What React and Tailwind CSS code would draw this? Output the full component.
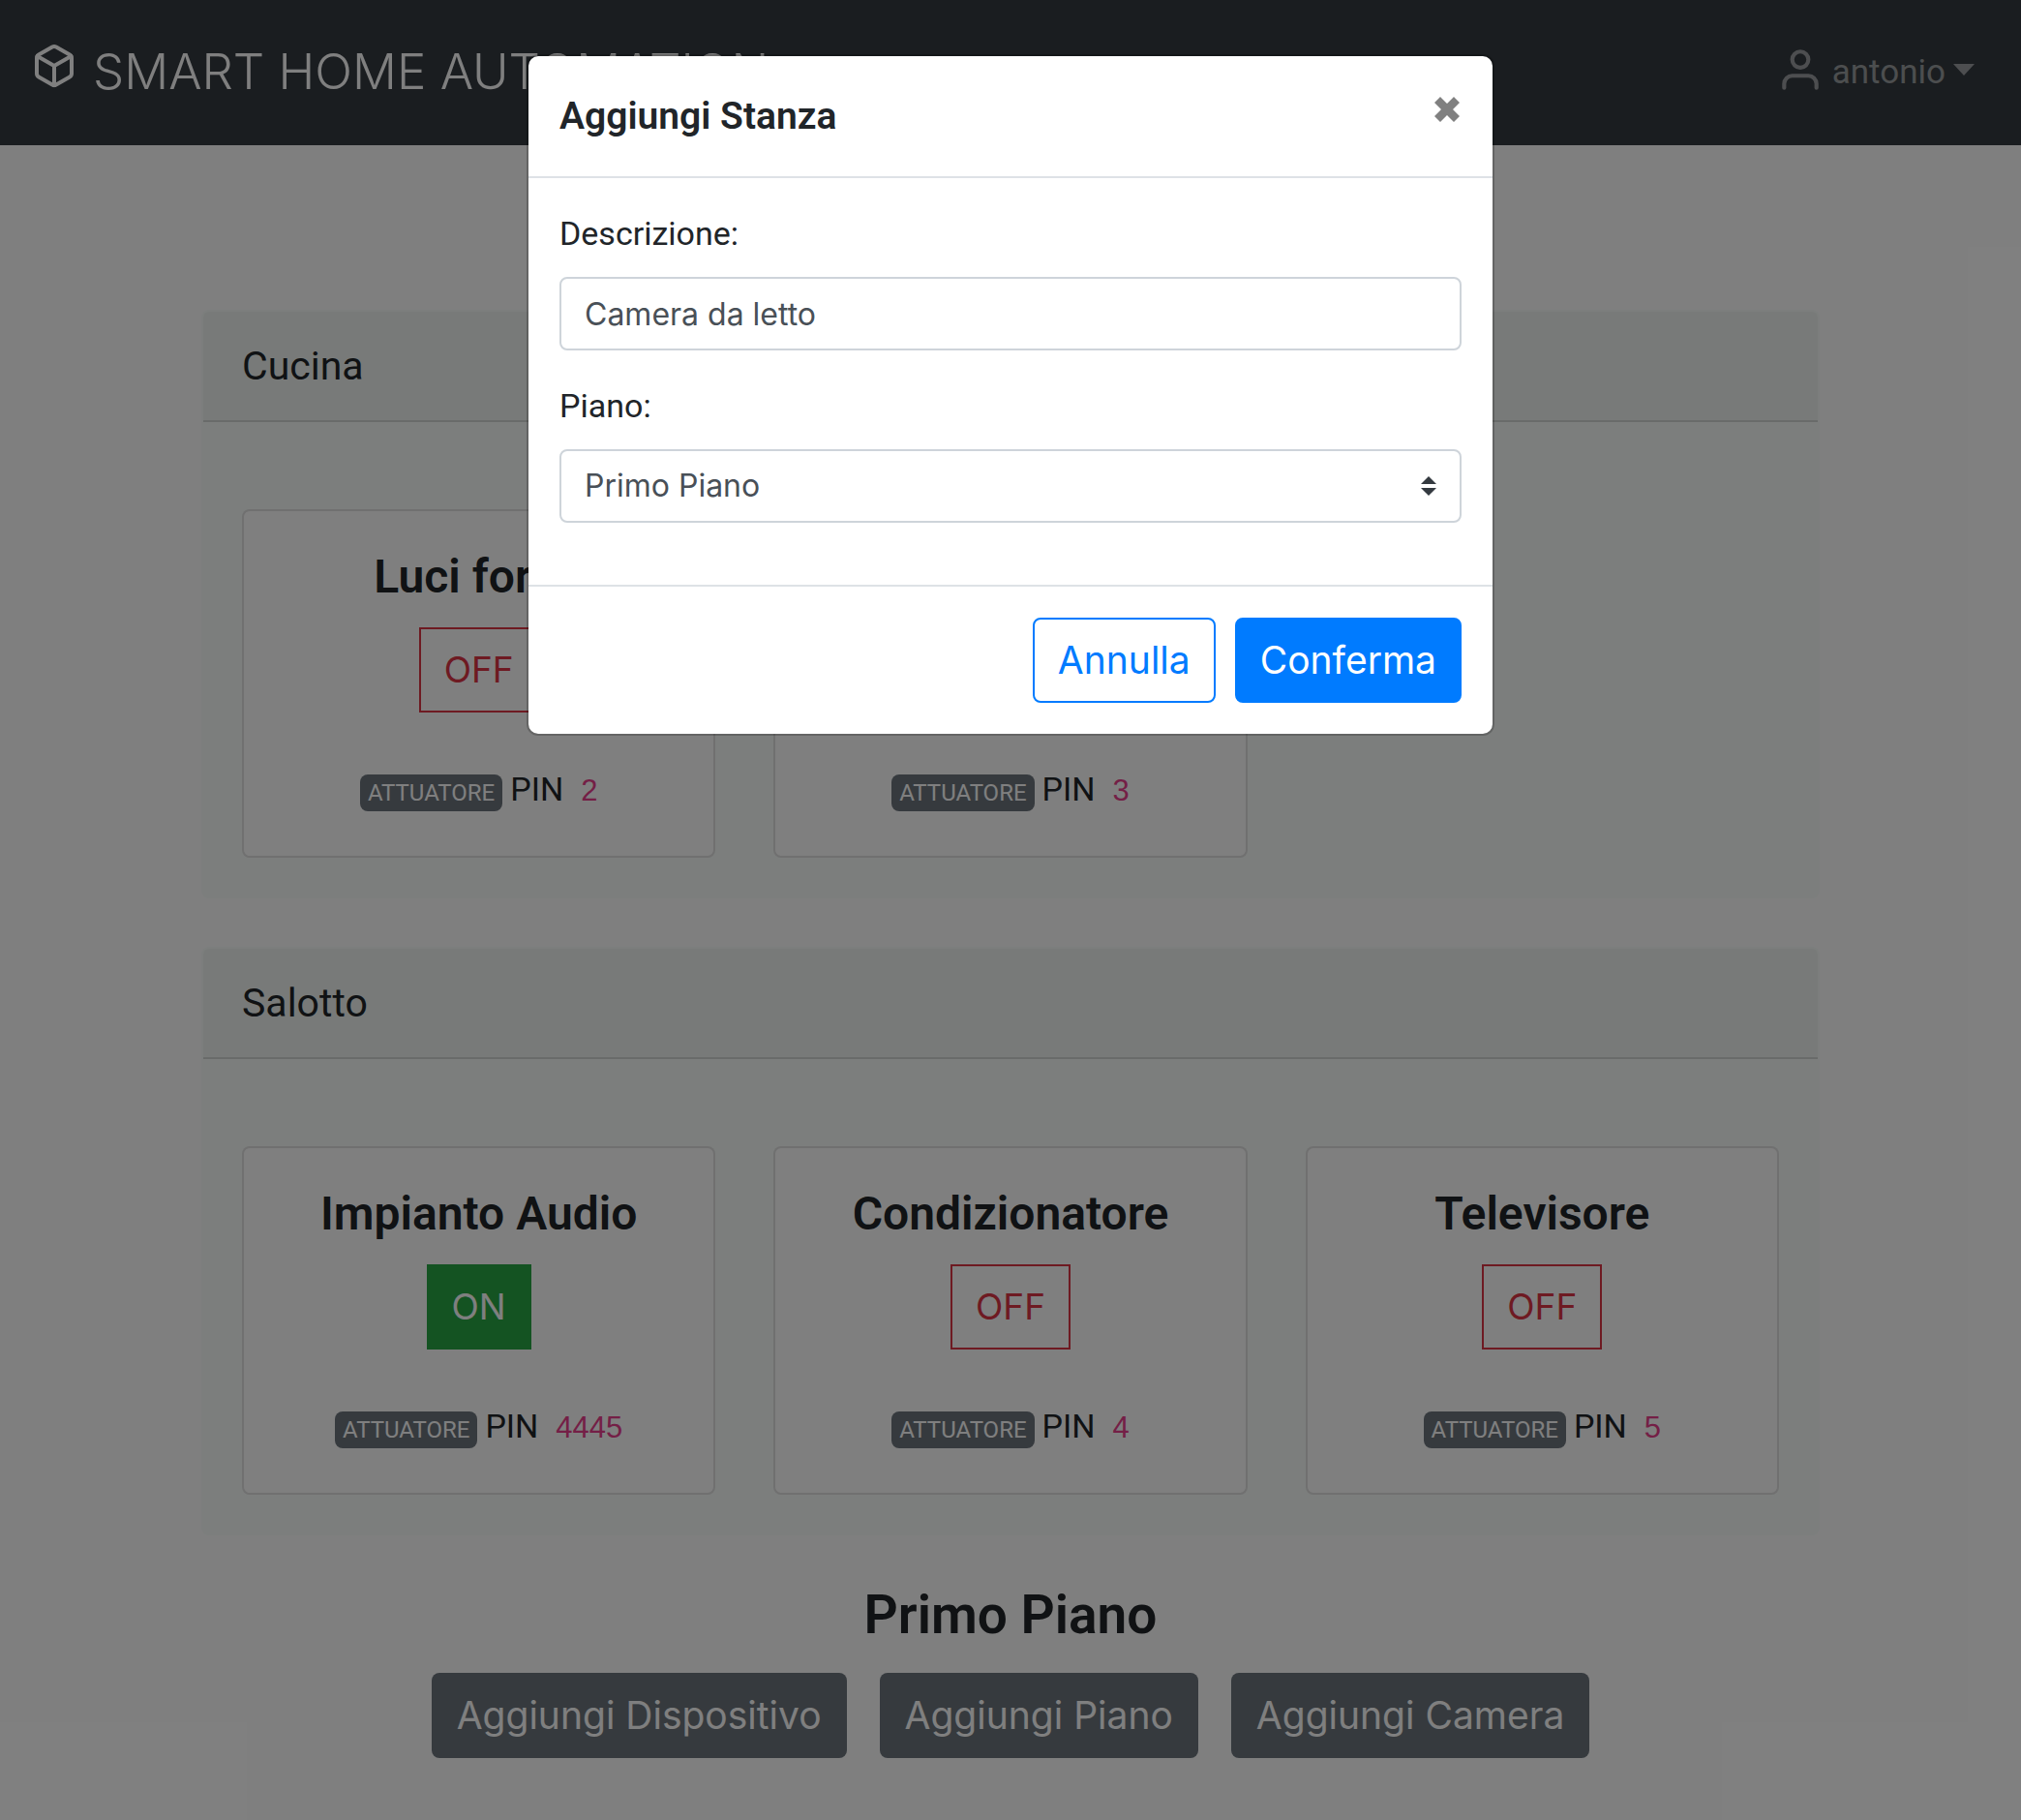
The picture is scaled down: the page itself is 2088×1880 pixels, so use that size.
const rooms = [
  {
    name: "Cucina",
    devices: [
      { name: "Luci forno", on: false, pin: "2" },
      { name: "Luci tavolo", on: false, pin: "3" },
    ],
  },
  {
    name: "Salotto",
    devices: [
      { name: "Impianto Audio", on: true, pin: "4445" },
      { name: "Condizionatore", on: false, pin: "4" },
      { name: "Televisore", on: false, pin: "5" },
    ],
  },
];

function Navbar() {
  return (
    <header className="flex h-[150px] items-start justify-between bg-[#343a40] px-8 pt-11">
      <a href="#" className="flex gap-4 text-white">
        <svg viewBox="0 0 24 24" className="size-12" fill="none" stroke="currentColor" strokeWidth="2" strokeLinecap="round" strokeLinejoin="round" aria-hidden="true">
          <path d="M21 16V8a2 2 0 0 0-1-1.73l-7-4a2 2 0 0 0-2 0l-7 4A2 2 0 0 0 3 8v8a2 2 0 0 0 1 1.73l7 4a2 2 0 0 0 2 0l7-4A2 2 0 0 0 21 16z" />
          <path d="M3.27 6.96 12 12.01l8.73-5.05M12 22.08V12" />
        </svg>
        <span className="pt-1 font-['Inter'] text-[51px] leading-[52px] font-light">SMART HOME AUTOMATION</span>
      </a>
      <button type="button" className="flex items-center gap-2 pr-4 text-white/50">
        <svg viewBox="0 0 24 24" className="size-[50px]" fill="none" stroke="currentColor" strokeWidth="2" strokeLinecap="round" strokeLinejoin="round" aria-hidden="true">
          <path d="M20 21v-2a4 4 0 0 0-4-4H8a4 4 0 0 0-4 4v2" />
          <circle cx="12" cy="7" r="4" />
        </svg>
        <span className="pt-1.5 text-[35px] leading-[50px]">antonio</span>
        <svg viewBox="0 0 22 12" className="h-3 w-[22px]" fill="currentColor" aria-hidden="true">
          <path d="M0 0h22L11 12z" />
        </svg>
      </button>
    </header>
  );
}

function Device({ device }) {
  return (
    <article className="flex flex-col items-center rounded-lg border-2 border-black/12 bg-white pt-10 pb-10">
      <h3 className="text-5xl leading-[56px] font-semibold">{device.name}</h3>
      {device.on ? (
        <button type="button" className="mt-6 h-[88px] border-2 border-[#28a745] bg-[#28a745] px-6 font-['Inter'] text-[37px] text-white">ON</button>
      ) : (
        <button type="button" className="mt-6 h-[88px] border-2 border-[#dc3545] px-6 font-['Inter'] text-[37px] text-[#dc3545]">OFF</button>
      )}
      <p className="mt-[52px] flex h-14 items-baseline gap-2 text-[34px] leading-[54px]">
        <span className="rounded-lg bg-[#6c757d] px-2 text-2xl leading-[38px] text-white">ATTUATORE</span>
        <span>PIN</span>
        <code className="pl-2.5 font-['Liberation_Sans'] text-[31px] text-[#e83e8c]">{device.pin}</code>
      </p>
    </article>
  );
}

function Room({ room }) {
  return (
    <section className="overflow-hidden rounded-lg border-2 border-transparent bg-[#f8fdfa] text-[#212529]">
      <h2 className="border-b-2 border-black/12 bg-black/3 px-10 py-7 text-[41px] leading-[56px]">{room.name}</h2>
      <div className="grid grid-cols-3 gap-[60px] px-10 pt-[90px] pb-10">
        {room.devices.map((d) => (
          <Device key={d.pin} device={d} />
        ))}
      </div>
    </section>
  );
}

function FloorActions() {
  return (
    <section className="flex flex-col items-center pt-[50px]">
      <h2 className="text-[55px] leading-[64px] font-semibold">Primo Piano</h2>
      <div className="mt-7 flex gap-[34px]">
        {["Aggiungi Dispositivo", "Aggiungi Piano", "Aggiungi Camera"].map((label) => (
          <button key={label} type="button" className="h-[88px] rounded-lg bg-[#6c757d] px-[26px] font-['Inter'] text-[39px] text-white">
            {label}
          </button>
        ))}
      </div>
    </section>
  );
}

function AddRoomDialog() {
  return (
    <div className="absolute inset-0 bg-black/50">
      <form role="dialog" aria-labelledby="dialog-title" className="mx-auto mt-14 max-w-[1000px] rounded-xl border-2 border-black/20 bg-white bg-clip-padding text-[#212529]">
        <div className="flex items-start justify-between border-b-2 border-[#dee2e6] px-8 py-8">
          <h1 id="dialog-title" className="text-[39px] leading-[60px] font-semibold">Aggiungi Stanza</h1>
          <button type="button" aria-label="Chiudi" className="pt-2.5 pr-0.5 text-[#808080]">
            <svg viewBox="0 0 26 26" className="size-[26px]" fill="currentColor" aria-hidden="true">
              <path d="M6 0 13 7 20 0 26 6 19 13 26 20 20 26 13 19 6 26 0 20 7 13 0 6z" />
            </svg>
          </button>
        </div>
        <div className="flex flex-col px-8 pt-8 pb-16">
          <label htmlFor="descr" className="text-[34px] leading-[50px]">Descrizione:</label>
          <input id="descr" type="text" defaultValue="Camera da letto" className="mt-5 h-[76px] rounded-lg border-2 border-[#ced4da] bg-white px-6 font-['Inter'] text-[32px] text-[#495057]" />
          <label htmlFor="floor" className="mt-8 text-[34px] leading-[50px]">Piano:</label>
          <div className="relative mt-5 flex">
            <select id="floor" defaultValue="Primo Piano" className="h-[76px] flex-1 appearance-none rounded-lg border-2 border-[#ced4da] bg-white px-6 font-['Inter'] text-[32px] text-[#495057]">
              <option>Primo Piano</option>
              <option>Piano Terra</option>
            </select>
            <svg viewBox="0 0 4 5" className="pointer-events-none absolute inset-y-0 right-[26px] my-auto h-5 w-4" fill="#343a40" aria-hidden="true">
              <path d="M2 0 0 2h4zm0 5L0 3h4z" />
            </svg>
          </div>
        </div>
        <div className="flex justify-end gap-5 border-t-2 border-[#dee2e6] p-8">
          <button type="button" className="h-[88px] rounded-lg border-2 border-[#007bff] px-6 font-['Inter'] text-[39px] text-[#007bff]">Annulla</button>
          <button type="submit" className="h-[88px] rounded-lg border-2 border-[#007bff] bg-[#007bff] px-6 font-['Inter'] text-[39px] text-white">Conferma</button>
        </div>
      </form>
    </div>
  );
}

export default function App() {
  return (
    <div className="relative min-h-screen bg-white font-['Roboto',sans-serif] text-[#212529]">
      <Navbar />
      <main className="flex flex-col gap-[50px] px-52 pt-[170px]">
        {rooms.map((r) => (
          <Room key={r.name} room={r} />
        ))}
      </main>
      <FloorActions />
      <AddRoomDialog />
    </div>
  );
}
